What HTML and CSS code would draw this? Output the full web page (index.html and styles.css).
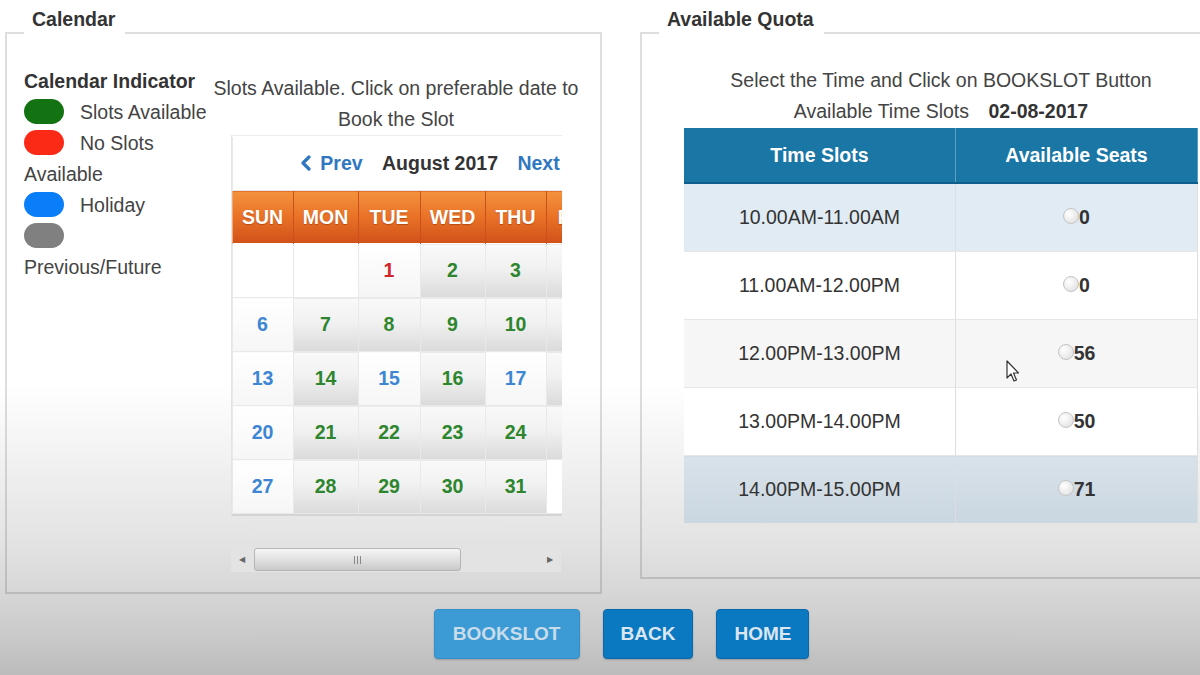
FILE: index.html
```html
<!DOCTYPE html>
<html lang="en">
<head>
  <meta charset="UTF-8">
  <meta name="viewport" content="width=device-width, initial-scale=1.0">
  <title>Book Slot</title>
  <link rel="stylesheet" href="styles.css">
</head>

<body>
  <div class="panels">
    <fieldset class="box box-calendar">
      <legend>Calendar</legend>
      <div class="calendar-wrap">
        <div class="indicator">
          <div class="indicator-title">Calendar Indicator</div>
          <div class="indicator-item"><span class="pill pill-green"></span>Slots Available</div>
          <div class="indicator-item"><span class="pill pill-red"></span>No Slots Available</div>
          <div class="indicator-item"><span class="pill pill-blue"></span>Holiday</div>
          <div class="indicator-item"><span class="pill pill-gray"></span>Previous/Future</div>
        </div>

        <div class="calendar-col">
          <p class="hint">Slots Available. Click on preferable date to Book the Slot</p>
          <div class="cal-view">
            <table class="cal">
              <colgroup>
                <col style="width: 61px">
                <col style="width: 65px">
                <col style="width: 62px">
                <col style="width: 65px">
                <col style="width: 61px">
                <col style="width: 55px">
                <col style="width: 55px">
              </colgroup>
              <tr class="cal-nav">
                <td colspan="7">
                  <a class="nav-link">
                    <svg width="12" height="16" viewBox="0 0 12 16"><path d="M9 2 L3 8 L9 14" fill="none" stroke="#2f78c0" stroke-width="3.2" stroke-linecap="round" stroke-linejoin="round"/></svg>
                    Prev</a>
                  <span class="month">August 2017</span>
                  <a class="nav-link">Next
                    <svg width="12" height="16" viewBox="0 0 12 16"><path d="M3 2 L9 8 L3 14" fill="none" stroke="#2f78c0" stroke-width="3.2" stroke-linecap="round" stroke-linejoin="round"/></svg>
                  </a>
                </td>
              </tr>
              <tr class="cal-head">
                <th>SUN</th><th>MON</th><th>TUE</th><th>WED</th><th>THU</th><th>FRI</th><th>SAT</th>
              </tr>
              <tr>
                <td class="empty"></td>
                <td class="empty"></td>
                <td class="full">1</td>
                <td class="open">2</td>
                <td class="open">3</td>
                <td class="open">4</td>
                <td class="holiday">5</td>
              </tr>
              <tr>
                <td class="holiday">6</td>
                <td class="open">7</td>
                <td class="open">8</td>
                <td class="open">9</td>
                <td class="open">10</td>
                <td class="open">11</td>
                <td class="holiday">12</td>
              </tr>
              <tr>
                <td class="holiday">13</td>
                <td class="open">14</td>
                <td class="holiday">15</td>
                <td class="open">16</td>
                <td class="holiday">17</td>
                <td class="open">18</td>
                <td class="holiday">19</td>
              </tr>
              <tr>
                <td class="holiday">20</td>
                <td class="open">21</td>
                <td class="open">22</td>
                <td class="open">23</td>
                <td class="open">24</td>
                <td class="open">25</td>
                <td class="holiday">26</td>
              </tr>
              <tr>
                <td class="holiday">27</td>
                <td class="open">28</td>
                <td class="open">29</td>
                <td class="open">30</td>
                <td class="open">31</td>
                <td class="empty"></td>
                <td class="empty"></td>
              </tr>
            </table>
          </div>

          <div class="hscroll">
            <span class="arrow">&#9664;</span>
            <div class="thumb"><span class="grip"></span></div>
            <span class="arrow">&#9654;</span>
          </div>
        </div>
      </div>
    </fieldset>

    <fieldset class="box box-quota">
      <legend>Available Quota</legend>
      <div class="quota">
        <p class="quota-text">Select the Time and Click on BOOKSLOT Button<br>
          Available Time Slots <b class="quota-date">02-08-2017</b></p>
        <table class="slots">
          <tr>
            <th>Time Slots</th>
            <th>Available Seats</th>
          </tr>
          <tr class="row-a">
            <td>10.00AM-11.00AM</td>
            <td><span class="radio"></span><b>0</b></td>
          </tr>
          <tr class="row-b">
            <td>11.00AM-12.00PM</td>
            <td><span class="radio"></span><b>0</b></td>
          </tr>
          <tr class="row-c">
            <td>12.00PM-13.00PM</td>
            <td><span class="radio"></span><b>56</b></td>
          </tr>
          <tr class="row-b">
            <td>13.00PM-14.00PM</td>
            <td><span class="radio"></span><b>50</b></td>
          </tr>
          <tr class="row-hover">
            <td>14.00PM-15.00PM</td>
            <td><span class="radio"></span><b>71</b></td>
          </tr>
        </table>
      </div>
    </fieldset>
  </div>

  <div class="actions">
    <button class="btn btn-faded">BOOKSLOT</button>
    <button class="btn">BACK</button>
    <button class="btn">HOME</button>
  </div>

  <svg class="cursor" width="14" height="24" viewBox="0 0 14 24">
    <path d="M1 1 L1 18 L5 14 L8 21 L10.5 20 L7.5 13 L12.5 13 Z" fill="#fff" stroke="#333" stroke-width="1.2" stroke-linejoin="round"/>
  </svg>
</body>

</html>
```

FILE: styles.css
```css
html {
  height: 100%;
}

body {
  position: relative;
  height: 100%;
  margin: 0;
  overflow: hidden;
  font-family: "Liberation Sans", Arial, sans-serif;
  font-size: 19.5px;
  color: #444;
  background: linear-gradient(to bottom, #fff 0%, #fff 57%, #efefef 70%, #e2e2e2 81%, #d6d6d6 88%, #c8c8c8 95%, #bbb 100%);
}

.panels {
  display: flex;
  align-items: flex-start;
  gap: 38px;
  padding: 9px 0 0 5px;
  width: 1300px;
}

.box {
  margin: 0;
  border: 2px solid rgba(0, 0, 0, 0.13);
  padding: 8px 19px 20px 17px;
  min-width: 0;
}

.box legend {
  padding: 0 10px 28px 8px;
  font-weight: bold;
  line-height: 20px;
  color: #333;
}

.box-calendar {
  width: 557px;
}

.box-quota {
  width: 600px;
  padding-bottom: 53px;
}

/* calendar side */

.calendar-wrap {
  display: flex;
}

.indicator {
  width: 187px;
  flex-shrink: 0;
}

.indicator-title {
  font-weight: bold;
  color: #333;
  line-height: 32px;
}

.indicator-item {
  width: 186px;
  line-height: 31px;
}

.pill {
  display: inline-block;
  width: 40px;
  height: 25px;
  margin-right: 16px;
  border-radius: 13px;
  vertical-align: middle;
  position: relative;
  top: -2px;
}

.pill-green { background: #137313; }
.pill-red { background: #fb2a16; }
.pill-blue { background: #0a7ef8; }
.pill-gray { background: #808080; }

.calendar-col {
  width: 370px;
  padding-top: 8px;
}

.hint {
  margin: 0;
  line-height: 31px;
  text-align: center;
}

.cal-view {
  width: 330px;
  margin: 0 auto;
  overflow: hidden;
  border-left: 1px solid #e4e4e4;
  border-top: 1px solid #ececec;
  border-bottom: 2px solid #d4d4d4;
}

.cal {
  width: 424px;
  table-layout: fixed;
  border-collapse: collapse;
}

.cal td,
.cal th {
  padding: 0;
  text-align: center;
  font-weight: bold;
}

.cal-nav td {
  height: 52px;
  background: #fff;
  white-space: nowrap;
  padding-right: 8px;
}

.nav-link {
  color: #2f78c0;
}

.nav-link svg {
  vertical-align: -1px;
  margin-right: 3px;
}

.month {
  margin: 0 14px 0 14px;
  color: #333;
}

.cal-head th {
  height: 52px;
  color: #fff;
  text-shadow: 0 1px 1px rgba(120, 40, 0, 0.45);
  background: linear-gradient(to bottom, #f4923e 0%, #ea7428 45%, #d1511a 100%);
  border-left: 1px solid #f2a774;
  border-right: 1px solid #c9511d;
}

.cal td {
  height: 53px;
  border: 1px solid #e9e9e9;
  border-top-color: #fff;
}

.cal .empty {
  background: #fff;
}

.cal .open {
  color: #2d862d;
  background: linear-gradient(to bottom, #f9f9f9 0%, #f1f1f1 45%, #dadada 100%);
}

.cal .holiday {
  color: #3c86d3;
  background: linear-gradient(to bottom, #fff 0%, #f6f6f6 100%);
}

.cal .full {
  color: #d3262a;
  background: linear-gradient(to bottom, #fff 0%, #f5f5f5 100%);
}

.hscroll {
  display: flex;
  align-items: center;
  width: 330px;
  height: 25px;
  margin: 31px auto 0;
  background: #e3e3e3;
}

.arrow {
  width: 22px;
  font-size: 8px;
  color: #666;
  text-align: center;
}

.thumb {
  display: flex;
  justify-content: center;
  align-items: center;
  width: 205px;
  height: 21px;
  margin-left: 1px;
  border: 1px solid #b4b4b4;
  border-radius: 3px;
  background: linear-gradient(to bottom, #f6f6f6, #dcdcdc 60%, #c9c9c9);
}

.grip {
  width: 8px;
  height: 8px;
  background: repeating-linear-gradient(to right, #888 0, #888 1px, transparent 1px, transparent 3px);
}

.hscroll .arrow:last-child {
  margin-left: auto;
}

/* quota side */

.quota {
  width: 514px;
  margin-left: 25px;
}

.quota-text {
  margin: 0;
  line-height: 31px;
  text-align: center;
}

.quota-date {
  margin-left: 14px;
  color: #333;
}

.slots {
  width: 514px;
  margin-top: 1px;
  table-layout: fixed;
  border-collapse: collapse;
}

.slots th {
  width: 50%;
  height: 52px;
  color: #fff;
  background: #1a76a5;
  border-bottom: 2px solid #0f5f8c;
  border-right: 1px solid #5b9fc3;
}

.slots th:first-child {
  width: 269px;
}

.slots td {
  height: 67px;
  padding: 0;
  text-align: center;
  color: #333;
  border-bottom: 1px solid #e6e6e6;
  border-right: 1px solid #dedede;
}

.slots td b {
  color: #333;
}

.row-a td { background: #e1ebf4; }
.row-b td { background: #fff; }
.row-c td { background: #f6f6f6; }
.row-hover td { background: linear-gradient(to bottom, #d8e2ea, #cad6e0); }

.radio {
  display: inline-block;
  width: 14px;
  height: 14px;
  border: 1px solid #c4c4c4;
  border-radius: 50%;
  background: radial-gradient(circle at 35% 35%, #fff, #dcdcdc);
  position: relative;
  top: -3px;
  vertical-align: middle;
}

/* buttons */

.actions {
  display: flex;
  justify-content: center;
  gap: 23px;
  padding-left: 43px;
  margin-top: 15px;
}

.btn {
  height: 50px;
  padding: 0 17px;
  border: 1px solid #0868aa;
  border-radius: 4px;
  background: #0b79c1;
  color: #dbe6ef;
  font-family: "Liberation Sans", Arial, sans-serif;
  font-size: 19px;
  font-weight: bold;
  box-shadow: 0 1px 2px rgba(0, 0, 0, 0.2);
}

.btn-faded {
  width: 146px;
  background: #3c9bd4;
  border-color: #3590c8;
  color: #c9dcea;
}

.cursor {
  position: absolute;
  left: 1006px;
  top: 360px;
}
```
